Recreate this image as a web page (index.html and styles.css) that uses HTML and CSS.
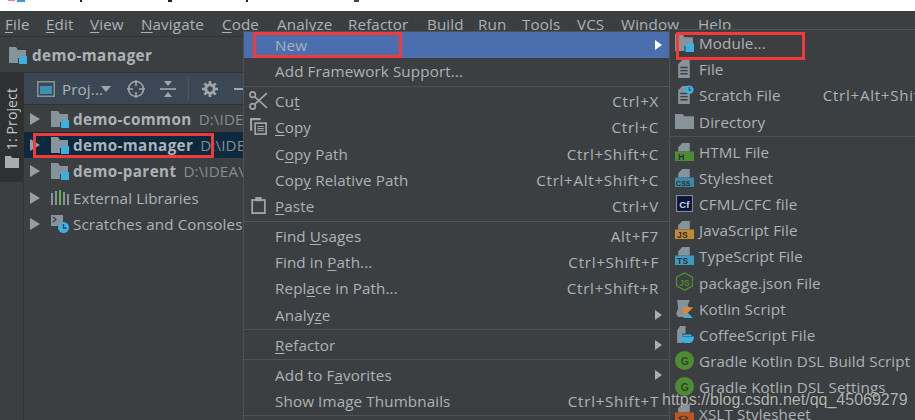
FILE: index.html
```html
<!DOCTYPE html>
<html lang="en">
<head>
    <meta charset="UTF-8">
    <title>demo-manager - New Module</title>
    <link rel="stylesheet" href="styles.css">
</head>
<body>
    <svg class="defs" width="0" height="0">
        <symbol id="module" viewBox="0 0 18 18">
            <path d="M0 1h7l2 3h8v8H9v5H0z" fill="#87939a"/>
            <rect x="10" y="10" width="8" height="8" fill="#3cb0e0"/>
        </symbol>
        <symbol id="folder" viewBox="0 0 18 18">
            <path d="M0 2h7l2 2h9v12H0z" fill="#87939a"/>
        </symbol>
        <symbol id="filetop" viewBox="0 0 18 18">
            <path d="M3 9V5l4-4h7v8z" fill="#87939a"/>
        </symbol>
        <symbol id="file" viewBox="0 0 18 18">
            <path d="M3 18V5l4-4h7v17z" fill="#87939a"/>
            <path d="M5 8h7M5 11h7M5 14h7" stroke="#3c3f41" stroke-width="1.3"/>
        </symbol>
        <symbol id="clock" viewBox="0 0 12 12">
            <circle cx="6" cy="6" r="5.5" fill="#3cb0e0"/>
            <path d="M6 2.5V6.5H8.5" stroke="#3c3f41" stroke-width="1.3" fill="none"/>
        </symbol>
    </svg>

    <div class="page">
        <svg class="top-band" width="915" height="11">
            <rect x="8" y="0" width="7" height="1" fill="#f27a9a"/>
            <rect x="17" y="0" width="8" height="2" fill="#3a9af0"/>
            <rect x="80" y="0" width="2" height="2" fill="#222"/>
            <rect x="168" y="0" width="4" height="2" fill="#222"/>
            <rect x="246" y="0" width="2" height="2" fill="#222"/>
            <rect x="354" y="0" width="5" height="2" fill="#444"/>
        </svg>

        <div class="menubar">
            <span class="m-file"><u>F</u>ile</span>
            <span class="m-edit"><u>E</u>dit</span>
            <span class="m-view"><u>V</u>iew</span>
            <span class="m-nav"><u>N</u>avigate</span>
            <span class="m-code"><u>C</u>ode</span>
            <span class="m-an">Analyze</span>
            <span class="m-ref">Refactor</span>
            <span class="m-build">Build</span>
            <span class="m-run">Run</span>
            <span class="m-tools">Tools</span>
            <span class="m-vcs">VCS</span>
            <span class="m-win">Window</span>
            <span>Help</span>
        </div>

        <div class="navbar">
            <svg class="ico"><use href="#module"/></svg>
            <b>demo-manager</b>
        </div>

        <div class="workspace">
            <div class="strip">
                <div class="strip-tab">
                    <span class="vert">1: Project</span>
                    <svg class="strip-ico" viewBox="0 0 14 12"><path d="M0 0h6l1 2h7v10H0z" fill="#a9adb0"/></svg>
                </div>
            </div>
            <div class="panel">
                <div class="toolbar">
                    <svg class="tb-view" viewBox="0 0 18 16"><rect x=".75" y=".75" width="16.5" height="14.5" fill="none" stroke="#87939a" stroke-width="1.5"/><rect x="3" y="5" width="12" height="8" fill="#3f8fb0"/></svg>
                    <span class="tb-label">Proj...</span>
                    <i class="tb-caret"></i>
                    <svg class="tb-target" viewBox="0 0 18 18"><circle cx="9" cy="9" r="7.5" fill="none" stroke="#a0a5a9" stroke-width="1.6"/><path d="M9 0v6M9 12v6M0 9h6M12 9h6" stroke="#a0a5a9" stroke-width="1.6"/></svg>
                    <svg class="tb-collapse" viewBox="0 0 16 18"><path d="M0 9h16" stroke="#a0a5a9" stroke-width="1.6"/><path d="M4 1h8L8 6zM4 17h8L8 12z" fill="#a0a5a9"/></svg>
                    <i class="tb-sep"></i>
                    <svg class="tb-gear" viewBox="0 0 16 16"><circle cx="8" cy="8" r="4.2" fill="none" stroke="#a0a5a9" stroke-width="3"/><path d="M8 0v3M8 13v3M0 8h3M13 8h3M2.3 2.3l2 2M11.7 11.7l2 2M2.3 13.7l2-2M11.7 4.3l2-2" stroke="#a0a5a9" stroke-width="2.6"/></svg>
                    <i class="tb-minus"></i>
                </div>
                <div class="tree">
                    <div class="tree-row">
                        <i class="tw"></i><svg class="ico"><use href="#module"/></svg>
                        <b>demo-common</b><span class="path">D:\IDE</span>
                    </div>
                    <div class="tree-row selected">
                        <i class="tw"></i><svg class="ico"><use href="#module"/></svg>
                        <b>demo-manager</b><span class="path">D:\IDE</span>
                    </div>
                    <div class="tree-row">
                        <i class="tw"></i><svg class="ico"><use href="#module"/></svg>
                        <b>demo-parent</b><span class="path">D:\IDEA\</span>
                    </div>
                    <div class="tree-row">
                        <i class="tw"></i>
                        <svg class="ico" viewBox="0 0 18 18"><path d="M1 4v12" stroke="#87939a" stroke-width="2"/><path d="M5 2v14" stroke="#87939a" stroke-width="2"/><path d="M9 1v15" stroke="#62b543" stroke-width="2"/><path d="M13 3v13" stroke="#87939a" stroke-width="2"/><path d="M17 5v11" stroke="#87939a" stroke-width="2"/></svg>
                        <span>External Libraries</span>
                    </div>
                    <div class="tree-row">
                        <i class="tw"></i>
                        <svg class="ico" viewBox="0 0 18 18"><rect x="0" y="0" width="12" height="11" fill="#87939a"/><path d="M2 2l3 2.5L2 7" stroke="#3c3f41" fill="none" stroke-width="1.2"/><circle cx="12.5" cy="12.5" r="5.5" fill="#3cb0e0"/><path d="M12.5 9v4h3" stroke="#3c3f41" stroke-width="1.3" fill="none"/></svg>
                        <span>Scratches and Consoles</span>
                    </div>
                </div>
            </div>
        </div>

        <!-- context menu -->
        <div class="popup main-menu">
            <div class="item active"><span>New</span><i class="arrow white"></i></div>
            <div class="item"><span>Add Framework Support...</span></div>
            <div class="sep"></div>
            <div class="item">
                <svg class="mi" viewBox="0 0 18 18"><circle cx="3.5" cy="3.5" r="2.6" fill="none" stroke="#a0a5a9" stroke-width="1.6"/><circle cx="3.5" cy="14.5" r="2.6" fill="none" stroke="#a0a5a9" stroke-width="1.6"/><path d="M5.5 5.5L17 16M5.5 12.5L17 2" stroke="#a0a5a9" stroke-width="1.6"/></svg>
                <span>Cu<u>t</u></span><em>Ctrl+X</em>
            </div>
            <div class="item">
                <svg class="mi" viewBox="0 0 18 18"><path d="M1 1h10v2H3v10H1z" fill="#a0a5a9"/><rect x="5.8" y="5.8" width="10.4" height="10.4" fill="none" stroke="#a0a5a9" stroke-width="1.6"/><path d="M8 9h6M8 11h6M8 13h6" stroke="#a0a5a9"/></svg>
                <span><u>C</u>opy</span><em>Ctrl+C</em>
            </div>
            <div class="item"><span>C<u>o</u>py Path</span><em>Ctrl+Shift+C</em></div>
            <div class="item"><span>Cop<u>y</u> Relative Path</span><em>Ctrl+Alt+Shift+C</em></div>
            <div class="item">
                <svg class="mi" viewBox="0 0 18 18"><rect x="3" y="3.8" width="12" height="12.4" fill="none" stroke="#a0a5a9" stroke-width="1.7"/><rect x="6" y="1" width="6" height="4" fill="#a0a5a9"/></svg>
                <span><u>P</u>aste</span><em>Ctrl+V</em>
            </div>
            <div class="sep"></div>
            <div class="item"><span>Find <u>U</u>sages</span><em>Alt+F7</em></div>
            <div class="item"><span>Find in <u>P</u>ath...</span><em>Ctrl+Shift+F</em></div>
            <div class="item"><span>Repl<u>a</u>ce in Path...</span><em>Ctrl+Shift+R</em></div>
            <div class="item"><span>Analy<u>z</u>e</span><i class="arrow"></i></div>
            <div class="sep"></div>
            <div class="item"><span><u>R</u>efactor</span><i class="arrow"></i></div>
            <div class="sep"></div>
            <div class="item"><span>Add to F<u>a</u>vorites</span><i class="arrow"></i></div>
            <div class="item"><span>Show Image Thumbnails</span><em>Ctrl+Shift+T</em></div>
            <div class="sep"></div>
        </div>

        <!-- New submenu -->
        <div class="popup sub-menu">
            <div class="item"><svg class="mi"><use href="#module"/></svg><span>Module...</span></div>
            <div class="item"><svg class="mi"><use href="#file"/></svg><span>File</span></div>
            <div class="item">
                <svg class="mi" viewBox="0 0 18 18"><use href="#file" width="18" height="18"/><use href="#clock" x="9" y="0" width="9" height="9"/></svg>
                <span>Scratch File</span><em class="sc-long">Ctrl+Alt+Shift+N</em>
            </div>
            <div class="item"><svg class="mi"><use href="#folder"/></svg><span>Directory</span></div>
            <div class="sep"></div>
            <div class="item">
                <svg class="mi" viewBox="0 0 18 18"><use href="#filetop" width="18" height="18"/><rect y="9" width="18" height="9" fill="#4f8a35"/><text x="3" y="17" class="ic-text">H</text></svg>
                <span>HTML File</span>
            </div>
            <div class="item">
                <svg class="mi" viewBox="0 0 18 18"><use href="#filetop" width="18" height="18"/><rect y="9" width="18" height="9" fill="#3f87a8"/><text x="1" y="17" class="ic-text small">CSS</text></svg>
                <span>Stylesheet</span>
            </div>
            <div class="item">
                <svg class="mi" viewBox="0 0 18 18"><rect x="1.5" y="1.5" width="15" height="15" fill="#0b1437" stroke="#87939a"/><text x="4" y="13" class="ic-text light">Cf</text></svg>
                <span>CFML/CFC file</span>
            </div>
            <div class="item">
                <svg class="mi" viewBox="0 0 18 18"><use href="#filetop" width="18" height="18"/><rect y="9" width="18" height="9" fill="#c08a30"/><text x="2" y="17" class="ic-text">JS</text></svg>
                <span>JavaScript File</span>
            </div>
            <div class="item">
                <svg class="mi" viewBox="0 0 18 18"><use href="#filetop" width="18" height="18"/><rect y="9" width="18" height="9" fill="#3f9ac0"/><text x="2" y="17" class="ic-text">TS</text></svg>
                <span>TypeScript File</span>
            </div>
            <div class="item">
                <svg class="mi" viewBox="0 0 18 18"><path d="M9 .8l7.500 4.100v8.200L9 17.200l-7.500-4.100V4.900z" fill="none" stroke="#4f8a35" stroke-width="1.3"/><text x="4" y="13" class="ic-text green">JS</text></svg>
                <span>package.json File</span>
            </div>
            <div class="item">
                <svg class="mi" viewBox="0 0 18 18"><path d="M2 1h12l-2 5 2 3-5 1-1 7H3l-2-3 2-5z" fill="#87939a"/><path d="M8 8h9l-5 5 5 5H8z" fill="#3cb0e0"/><path d="M8 8h9l-9 9z" fill="#f08030"/></svg>
                <span>Kotlin Script</span>
            </div>
            <div class="item">
                <svg class="mi" viewBox="0 0 18 18"><path d="M5 1h5v7H7v9H2V5z" fill="#87939a"/><path d="M5 11h13c0 4-2 6-4 6H9c-2 0-4-2-4-6zM8 9h7l1 1.500H7z" fill="#3cb0e0"/></svg>
                <span>CoffeeScript File</span>
            </div>
            <div class="item">
                <svg class="mi" viewBox="0 0 18 18"><circle cx="9" cy="9" r="9" fill="#4f8a35"/><text x="5.500" y="13" class="ic-text dark">G</text></svg>
                <span>Gradle Kotlin DSL Build Script</span>
            </div>
            <div class="item">
                <svg class="mi" viewBox="0 0 18 18"><circle cx="9" cy="9" r="9" fill="#4f8a35"/><text x="5.500" y="13" class="ic-text dark">G</text></svg>
                <span>Gradle Kotlin DSL Settings</span>
            </div>
            <div class="item">
                <svg class="mi" viewBox="0 0 18 18"><use href="#filetop" width="18" height="18"/><rect y="9" width="18" height="9" fill="#c0561f"/><text x="3" y="17" class="ic-text">&lt;&gt;</text></svg>
                <span>XSLT Stylesheet</span>
            </div>
        </div>

        <!-- red annotation boxes -->
        <div class="mark mark-new"></div>
        <div class="mark mark-module"></div>
        <div class="mark mark-tree"></div>

        <div class="watermark">https://blog.csdn.net/qq_45069279</div>
    </div>
</body>
</html>
```

FILE: styles.css
```css
body {
    margin: 0;
    background: #3c3f41;
    font-family: "Open Sans", "Noto Sans", sans-serif;
    font-size: 15.2px;
    letter-spacing: 0.12px;
    color: #adb2b6;
}
b {
    letter-spacing: 0.4px;
}
.defs {
    position: absolute;
}
.page {
    position: relative;
    width: 915px;
    height: 420px;
    overflow: hidden;
    background: #3c3f41;
}
.top-band {
    display: block;
    background: #fff;
}
u {
    text-underline-offset: 2px;
}

/* Menu bar */
.menubar {
    display: flex;
    align-items: center;
    height: 26px;
    padding-left: 5px;
    box-sizing: border-box;
    border-bottom: 1px solid #323232;
    white-space: nowrap;
}
.menubar span {
    flex: none;
}
.m-file { width: 41px; }
.m-edit { width: 44px; }
.m-view { width: 51px; }
.m-nav { width: 81px; }
.m-code { width: 55px; }
.m-an { width: 71px; }
.m-ref { width: 79px; }
.m-build { width: 51px; }
.m-run { width: 44px; }
.m-tools { width: 55px; }
.m-vcs { width: 44px; }
.m-win { width: 77px; }

/* Nav bar */
.navbar {
    display: flex;
    align-items: center;
    gap: 5px;
    height: 36px;
    padding-left: 9px;
    box-sizing: border-box;
    border-bottom: 1px solid #323232;
}
.ico {
    flex: none;
    width: 18px;
    height: 18px;
}

/* Left strip + project panel */
.workspace {
    display: flex;
    width: 243px;
    height: 347px;
    overflow: hidden;
}
.strip {
    flex: none;
    width: 24px;
    border-right: 1px solid #323232;
    box-sizing: border-box;
}
.strip-tab {
    display: flex;
    flex-direction: column;
    align-items: center;
    height: 109px;
    padding-top: 15px;
    box-sizing: border-box;
    background: #2e3032;
}
.vert {
    writing-mode: vertical-rl;
    transform: rotate(180deg);
    font-size: 14px;
    line-height: 16px;
    color: #c4c6c8;
}
.strip-ico {
    width: 14px;
    height: 12px;
    margin-top: 6px;
}
.panel {
    flex: 1;
    min-width: 0;
}
.toolbar {
    display: flex;
    align-items: center;
    height: 32px;
    padding-left: 13px;
    background: #3b4754;
    border-bottom: 1px solid #323232;
    box-sizing: border-box;
}
.tb-view {
    width: 18px;
    height: 16px;
}
.tb-label {
    margin-left: 7px;
    width: 39px;
}
.tb-caret {
    width: 0;
    height: 0;
    border-left: 5px solid transparent;
    border-right: 5px solid transparent;
    border-top: 6px solid #a0a5a9;
}
.tb-target {
    width: 18px;
    height: 18px;
    margin-left: 16px;
}
.tb-collapse {
    width: 16px;
    height: 18px;
    margin-left: 15px;
}
.tb-sep {
    width: 1px;
    height: 22px;
    margin-left: 12px;
    background: #51575e;
}
.tb-gear {
    width: 16px;
    height: 16px;
    margin-left: 13px;
}
.tb-minus {
    width: 9px;
    height: 2px;
    margin-left: 16px;
    background: #a0a5a9;
}

/* Tree */
.tree {
    padding-top: 1px;
}
.tree-row {
    display: flex;
    align-items: center;
    height: 26.2px;
    padding-left: 6px;
    white-space: nowrap;
    overflow: hidden;
}
.tree-row.selected {
    background: #0d293e;
}
.tree-row b {
    margin-right: 7px;
}
.tree-row .ico {
    margin-left: 11px;
    margin-right: 4px;
}
.tw {
    flex: none;
    width: 0;
    height: 0;
    border-top: 6px solid transparent;
    border-bottom: 6px solid transparent;
    border-left: 10px solid #9a9ea1;
}
.path {
    color: #868c90;
}

/* Popups */
.popup {
    position: absolute;
    box-sizing: border-box;
    background: #3c3f41;
    border: 1px solid #515151;
}
.main-menu {
    left: 243px;
    top: 31px;
    width: 427px;
    height: 400px;
}
.sub-menu {
    left: 669px;
    top: 29px;
    width: 300px;
    height: 400px;
}
.item {
    display: flex;
    align-items: center;
    height: 26.2px;
    padding-left: 31px;
    padding-right: 10px;
    white-space: nowrap;
    position: relative;
}
.item.active {
    background: #4b6eaf;
}
.item em {
    margin-left: auto;
    font-style: normal;
    letter-spacing: 0.7px;
}
.mi {
    position: absolute;
    left: 5px;
    top: 3px;
    width: 19px;
    height: 19px;
}
.sub-menu .item {
    padding-left: 29px;
}
.sep {
    height: 3.8px;
    display: flex;
    align-items: center;
}
.sep::after {
    content: "";
    flex: 1;
    height: 1px;
    background: #515151;
}
.arrow {
    margin-left: auto;
    margin-right: -3px;
    width: 0;
    height: 0;
    border-top: 5px solid transparent;
    border-bottom: 5px solid transparent;
    border-left: 7px solid #a9adb0;
}
.arrow.white {
    border-left-color: #fff;
}
.sub-menu .item .sc-long {
    margin-left: 42px;
}

/* Text inside file icons */
.ic-text {
    font-family: "Liberation Sans", sans-serif;
    font-weight: bold;
    font-size: 8px;
    fill: #2b2d2f;
}
.ic-text.small {
    font-size: 6.5px;
}
.ic-text.light {
    fill: #c8d4e8;
    font-size: 9px;
}
.ic-text.green {
    fill: #4f8a35;
}
.ic-text.dark {
    fill: #2b4a20;
    font-size: 10px;
}

/* Annotation */
.mark {
    position: absolute;
    box-sizing: border-box;
    border: 3px solid #f33a3a;
}
.mark-new {
    left: 253px;
    top: 32px;
    width: 149px;
    height: 26px;
}
.mark-module {
    left: 676px;
    top: 32px;
    width: 129px;
    height: 28px;
}
.mark-tree {
    left: 33px;
    top: 133px;
    width: 181px;
    height: 25px;
}
.watermark {
    position: absolute;
    left: 662px;
    top: 391px;
    font-family: "Liberation Sans", sans-serif;
    font-size: 16px;
    letter-spacing: 0;
    color: #b4b4b4;
    text-shadow: 0 0 1px #2a2a2a;
    white-space: nowrap;
}
```
